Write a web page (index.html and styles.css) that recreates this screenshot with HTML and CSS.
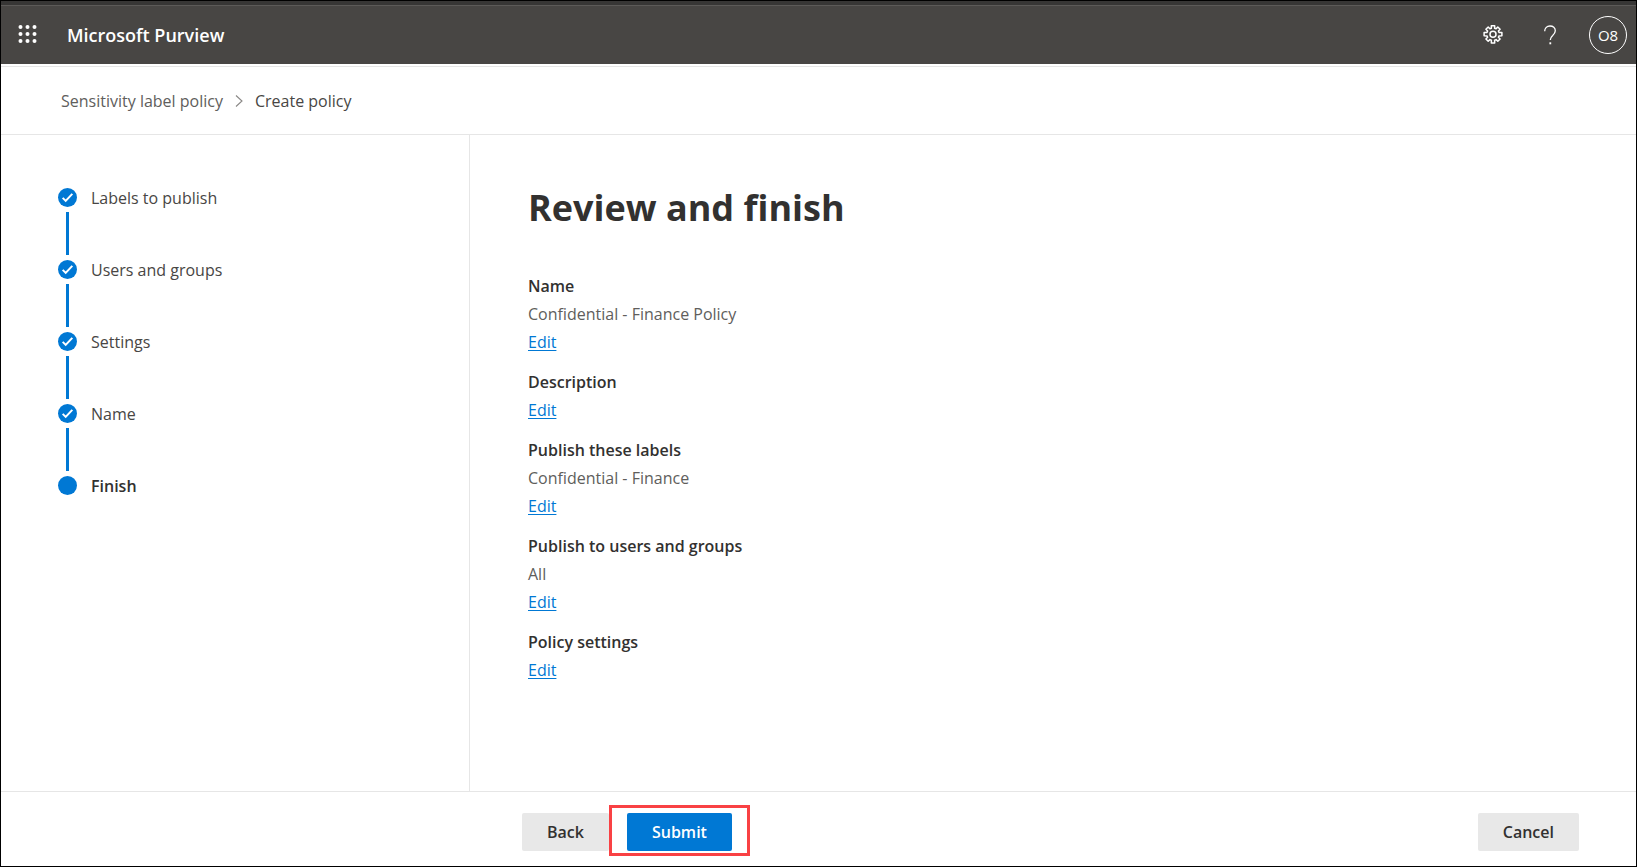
FILE: index.html
```html
<!DOCTYPE html>
<html lang="en">
<head>
<meta charset="utf-8">
<title>Microsoft Purview</title>
<link rel="stylesheet" href="styles.css">
</head>
<body>
<div class="app">
  <header class="topbar">
    <button class="icon-button" type="button" aria-label="App launcher">
      <svg width="20" height="20" viewBox="0 0 20 20" fill="#fff">
        <circle cx="2.500" cy="2" r="2"/><circle cx="9.500" cy="2" r="2"/><circle cx="16.500" cy="2" r="2"/>
        <circle cx="2.500" cy="9" r="2"/><circle cx="9.500" cy="9" r="2"/><circle cx="16.500" cy="9" r="2"/>
        <circle cx="2.500" cy="16" r="2"/><circle cx="9.500" cy="16" r="2"/><circle cx="16.500" cy="16" r="2"/>
      </svg>
    </button>
    <span class="brand">Microsoft Purview</span>
    <div class="tools">
      <button class="icon-button" type="button" aria-label="Settings">
        <svg width="20" height="20" viewBox="0 0 20 20" fill="none" stroke="#fff" stroke-width="1.500" stroke-linejoin="round">
          <path d="M8.400 3.200 8.300 .8h3.400l-.1 2.400 1.500.6 1.700-1.800 2.300 2.300-1.700 1.700.6 1.400 2.900.1v3.300l-2.900.1-.6 1.400 1.700 1.700-2.300 2.300-1.700-1.700-1.500.6.1 2.800H8.300l.1-2.800-1.500-.6-1.700 1.700L2.900 14l1.700-1.700-.6-1.400-2.900-.1V7.500L4 7.400 4.600 6 2.900 4.300 5.200 2l1.700 1.800z"/>
          <circle cx="10" cy="9.300" r="3"/>
        </svg>
      </button>
      <button class="icon-button" type="button" aria-label="Help">
        <svg width="20" height="20" viewBox="0 0 20 20" fill="none" stroke="#fff" stroke-width="1.300">
          <path d="M4.700 6.200C4.700 3 6.900 1 10 1s5.300 1.900 5.300 4.800c0 2.200-1.100 3.300-2.600 4.700-1.500 1.300-2.400 2.200-2.400 4.600"/>
          <path d="M10.300 17.300v2" stroke-width="1.800"/>
        </svg>
      </button>
      <button class="avatar" type="button">O8</button>
    </div>
  </header>

  <nav class="breadcrumb" aria-label="Breadcrumb">
    <a class="crumb" href="#">Sensitivity label policy</a>
    <svg width="8" height="14" viewBox="0 0 8 14" fill="none" stroke="#8a8886" stroke-width="1.100"><path d="M1 1.500l6 5.500-6 5.500"/></svg>
    <span class="crumb crumb-current">Create policy</span>
  </nav>

  <div class="content">
    <ol class="steps">
      <li class="step"><svg class="mark" viewBox="0 0 19 19"><circle cx="9.500" cy="9.500" r="9.500"/><path d="M4.700 9.900l3 3 6.600-7"/></svg><span>Labels to publish</span></li>
      <li class="step"><svg class="mark" viewBox="0 0 19 19"><circle cx="9.500" cy="9.500" r="9.500"/><path d="M4.700 9.900l3 3 6.600-7"/></svg><span>Users and groups</span></li>
      <li class="step"><svg class="mark" viewBox="0 0 19 19"><circle cx="9.500" cy="9.500" r="9.500"/><path d="M4.700 9.900l3 3 6.600-7"/></svg><span>Settings</span></li>
      <li class="step"><svg class="mark" viewBox="0 0 19 19"><circle cx="9.500" cy="9.500" r="9.500"/><path d="M4.700 9.900l3 3 6.600-7"/></svg><span>Name</span></li>
      <li class="step step-current" aria-current="step"><svg class="mark" viewBox="0 0 19 19"><circle cx="9.500" cy="9.500" r="9.500"/></svg><span>Finish</span></li>
    </ol>

    <main class="review">
      <h1 class="title">Review and finish</h1>
      <section class="item">
        <h2 class="item-name">Name</h2>
        <p class="item-value">Confidential - Finance Policy</p>
        <a class="edit" href="#">Edit</a>
      </section>
      <section class="item">
        <h2 class="item-name">Description</h2>
        <a class="edit" href="#">Edit</a>
      </section>
      <section class="item">
        <h2 class="item-name">Publish these labels</h2>
        <p class="item-value">Confidential - Finance</p>
        <a class="edit" href="#">Edit</a>
      </section>
      <section class="item">
        <h2 class="item-name">Publish to users and groups</h2>
        <p class="item-value">All</p>
        <a class="edit" href="#">Edit</a>
      </section>
      <section class="item">
        <h2 class="item-name">Policy settings</h2>
        <a class="edit" href="#">Edit</a>
      </section>
    </main>
  </div>

  <footer class="actions">
    <button class="button" type="button">Back</button>
    <div class="highlight"><button class="button button-primary" type="submit">Submit</button></div>
    <button class="button button-end" type="button">Cancel</button>
  </footer>
</div>
</body>
</html>
```
FILE: styles.css
```css
* {
  box-sizing: border-box;
}

body {
  margin: 0;
  font-family: "Open Sans", "Noto Sans", sans-serif;
  font-size: 16px;
  line-height: 28px;
  color: #323130;
  background: #fff;
}

.app {
  display: flex;
  flex-direction: column;
  min-height: 100vh;
  border: 1px solid #000;
}

.topbar {
  display: flex;
  align-items: center;
  height: 63px;
  padding: 5px 9px 0 12px;
  background: linear-gradient(#373635 4px, #5c5a58 4px, #5c5a58 5px, #484644 5px);
}

.icon-button {
  display: flex;
  align-items: center;
  justify-content: center;
  width: 30px;
  height: 40px;
  padding: 0;
  border: 0;
  background: none;
}

.brand {
  margin-left: 24px;
  font-size: 18px;
  font-weight: 600;
  color: #fff;
}

.tools {
  display: flex;
  align-items: center;
  gap: 27px;
  margin-left: auto;
}

.avatar {
  width: 38px;
  height: 38px;
  padding: 0;
  border: 1px solid #fff;
  border-radius: 50%;
  background: none;
  font-family: inherit;
  font-size: 15px;
  color: #fff;
}

.tools .avatar {
  margin-left: -3px;
}

.breadcrumb {
  display: flex;
  align-items: center;
  gap: 12px;
  height: 69px;
  margin-top: 2px;
  padding: 0 60px;
  border-top: 1px solid #e6e6e6;
  border-bottom: 1px solid #e6e6e6;
}

.crumb {
  color: #605e5c;
  text-decoration: none;
}

.crumb-current {
  color: #484644;
}

.content {
  display: flex;
  flex: 1;
}

.steps {
  flex: none;
  width: 469px;
  margin: 0;
  padding: 48px 24px 0 57px;
  border-right: 1px solid #e6e6e6;
  list-style: none;
}

.step {
  display: grid;
  grid-template-columns: 19px 1fr;
  grid-template-rows: 28px 44px;
  align-items: center;
  column-gap: 14px;
  line-height: 30px;
  color: #484644;
}

.step span {
  padding-top: 2px;
}

.step:not(:last-child)::after {
  content: "";
  justify-self: center;
  width: 3px;
  height: 43px;
  background: #0078d4;
}

.step-current {
  font-weight: 600;
  color: #323130;
}

.mark {
  width: 19px;
  height: 19px;
  fill: #0078d4;
}

.mark path {
  fill: none;
  stroke: #fff;
  stroke-width: 2;
}

.review {
  flex: 1;
  padding: 47px 58px 24px;
}

.title {
  margin: 0 0 38px;
  font-size: 36px;
  line-height: 52px;
  font-weight: 700;
}

.item {
  margin-bottom: 12px;
}

.item-name {
  margin: 0;
  font-size: 16px;
  font-weight: 600;
  color: #323130;
}

.item-value {
  margin: 0;
  color: #605e5c;
}

.edit {
  color: #0078d4;
  text-underline-offset: 2px;
}

.actions {
  display: flex;
  align-items: center;
  height: 75px;
  padding: 5px 57px 0 521px;
  border-top: 1px solid #e6e6e6;
}

.button {
  height: 38px;
  padding: 0 25px;
  border: 0;
  border-radius: 2px;
  background: #e8e8e8;
  font-family: inherit;
  font-size: 16px;
  font-weight: 600;
  color: #323130;
}

.button-primary {
  background: #0078d4;
  color: #fff;
}

.highlight {
  position: relative;
  display: flex;
  margin-left: 18px;
}

.highlight::before {
  content: "";
  position: absolute;
  inset: -8px -18px -5px;
  border: 3px solid #f94144;
  pointer-events: none;
}

.button-end {
  margin-left: auto;
}
```
